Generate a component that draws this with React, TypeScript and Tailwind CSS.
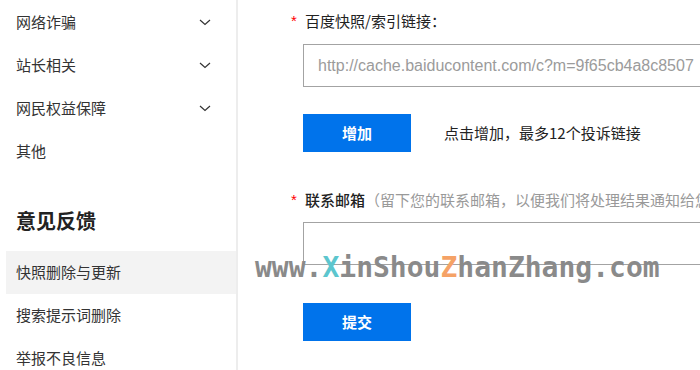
import React from "react";

const cjk = { fontFamily: '"Noto Sans CJK SC", "Liberation Sans", sans-serif' };

function Chevron() {
  return (
    <svg width="12" height="7" viewBox="0 0 12 7" className="shrink-0">
      <path d="M1 1 L6 5.5 L11 1" fill="none" stroke="#333" strokeWidth="1.2" />
    </svg>
  );
}

function NavRow({ label, chevron, active }: { label: string; chevron?: boolean; active?: boolean }) {
  return (
    <div
      className={
        "flex h-[43px] shrink-0 items-center justify-between pr-[25px] text-[15px] text-[#333] " +
        (active ? "ml-[6px] pl-[10px] bg-[#f3f3f3]" : "pl-[16px]")
      }
    >
      <span>{label}</span>
      {chevron && <Chevron />}
    </div>
  );
}

export default function App() {
  return (
    <div className="relative flex h-[370px] w-[700px] overflow-hidden bg-white" style={cjk}>
      <aside className="flex w-[238px] shrink-0 flex-col border-r-[2px] border-[#ededed] pt-[1px]">
        <NavRow label="网络诈骗" chevron />
        <NavRow label="站长相关" chevron />
        <NavRow label="网民权益保障" chevron />
        <NavRow label="其他" />
        <div className="mt-[34px] mb-[16px] shrink-0 pl-[16px] text-[20px] font-bold leading-[28px] text-[#222]">意见反馈</div>
        <NavRow label="快照删除与更新" active />
        <NavRow label="搜索提示词删除" />
        <NavRow label="举报不良信息" />
      </aside>
      <main className="flex min-w-0 flex-1 flex-col pl-[53px] pt-[10px]">
        <div className="flex h-[22px] shrink-0 items-center text-[15px] text-[#222]">
          <span className="w-[14px] shrink-0 text-[#f00]" style={{ fontFamily: '"Liberation Sans", sans-serif' }}>*</span>
          <span>百度快照/索引链接：</span>
        </div>
        <div className="ml-[12px] mt-[12px] flex h-[43px] w-[440px] shrink-0 items-center border border-[#a3a3a3] pl-[14px]">
          <span className="whitespace-nowrap text-[16px] text-[#9b9b9b]" style={{ fontFamily: '"Liberation Sans", sans-serif' }}>
            http://cache.baiducontent.com/c?m=9f65cb4a8c8507
          </span>
        </div>
        <div className="ml-[12px] mt-[27px] flex shrink-0 items-center">
          <div className="flex h-[38px] w-[108px] shrink-0 items-center justify-center bg-[#0073eb] text-[15px] font-bold text-white">增加</div>
          <span className="ml-[33px] whitespace-nowrap text-[15px] text-[#222]">点击增加，最多12个投诉链接</span>
        </div>
        <div className="mt-[37px] flex h-[22px] shrink-0 items-center whitespace-nowrap text-[15px]">
          <span className="w-[14px] shrink-0 text-[#f00]" style={{ fontFamily: '"Liberation Sans", sans-serif' }}>*</span>
          <span className="shrink-0 font-medium text-[#222]">联系邮箱</span>
          <span className="shrink-0 text-[#999]">（留下您的联系邮箱，以便我们将处理结果通知给您）</span>
        </div>
        <div className="ml-[12px] mt-[11px] h-[43px] w-[440px] shrink-0 border border-[#a3a3a3]" />
        <div className="ml-[12px] mt-[38px] flex h-[38px] w-[108px] shrink-0 items-center justify-center bg-[#0073eb] text-[15px] font-bold text-white">
          提交
        </div>
      </main>
      <div
        className="absolute left-[255px] top-[250px] whitespace-nowrap text-[28px] font-bold leading-[36px] text-[#8a8a8a]"
        style={{ fontFamily: '"DejaVu Sans Mono", monospace' }}
      >
        www.<span className="text-[#5cc6ce]">X</span>inShou<span className="text-[#f5a266]">Z</span>hanZhang.com
      </div>
    </div>
  );
}
